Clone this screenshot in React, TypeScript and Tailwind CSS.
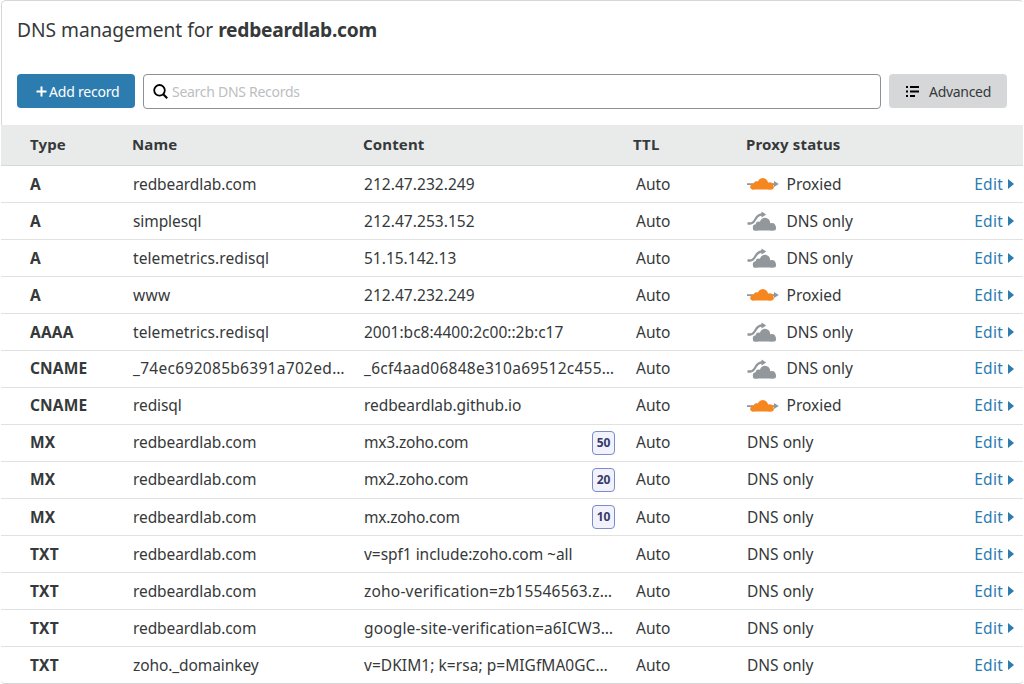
import React from "react";

type Row = {
  type: string;
  name: string;
  content: string;
  nameClass?: string;
  contentClass?: string;
  priority?: string;
  status: "proxied" | "dns" | "none";
  raised?: boolean;
};

const rows: Row[] = [
  { type: "A", name: "redbeardlab.com", content: "212.47.232.249", contentClass: "tracking-[0.05px]", status: "proxied" },
  { type: "A", name: "simplesql", content: "212.47.253.152", contentClass: "tracking-[0.05px]", status: "dns" },
  { type: "A", name: "telemetrics.redisql", nameClass: "tracking-[0.08px]", content: "51.15.142.13", status: "dns" },
  { type: "A", name: "www", nameClass: "tracking-[0.3px]", content: "212.47.232.249", contentClass: "tracking-[0.05px]", status: "proxied" },
  { type: "AAAA", name: "telemetrics.redisql", nameClass: "tracking-[0.08px]", content: "2001:bc8:4400:2c00::2b:c17", status: "dns" },
  { type: "CNAME", name: "_74ec692085b6391a702ed…", nameClass: "tracking-[0.3px]", content: "_6cf4aad06848e310a69512c455…", contentClass: "tracking-[0.25px]", status: "dns", raised: true },
  { type: "CNAME", name: "redisql", content: "redbeardlab.github.io", contentClass: "tracking-[-0.07px]", status: "proxied", raised: true },
  { type: "MX", name: "redbeardlab.com", content: "mx3.zoho.com", contentClass: "tracking-[-0.2px]", priority: "50", status: "none", raised: true },
  { type: "MX", name: "redbeardlab.com", content: "mx2.zoho.com", contentClass: "tracking-[-0.2px]", priority: "20", status: "none", raised: true },
  { type: "MX", name: "redbeardlab.com", content: "mx.zoho.com", contentClass: "tracking-[-0.2px]", priority: "10", status: "none" },
  { type: "TXT", name: "redbeardlab.com", content: "v=spf1 include:zoho.com ~all", contentClass: "tracking-[-0.04px]", status: "none" },
  { type: "TXT", name: "redbeardlab.com", content: "zoho-verification=zb15546563.z…", contentClass: "tracking-[0.2px]", status: "none" },
  { type: "TXT", name: "redbeardlab.com", content: "google-site-verification=a6ICW3…", contentClass: "tracking-[0.15px]", status: "none" },
  { type: "TXT", name: "zoho._domainkey", content: "v=DKIM1; k=rsa; p=MIGfMA0GC…", contentClass: "tracking-[0.05px]", status: "none" },
];

function ProxiedIcon() {
  return (
    <svg width="32" height="14" viewBox="0 0 32 14" className="shrink-0">
      <path d="M0 6.200h27V4l4.800 3L27 10V7.900H0z" fill="#92979b" />
      <g fill="#f6871f">
        <circle cx="15.800" cy="6.500" r="5.400" />
        <circle cx="9.600" cy="7.200" r="2.900" />
        <circle cx="6.300" cy="9.600" r="2.800" />
        <circle cx="22.700" cy="8.800" r="3.600" />
        <rect x="3.400" y="8" width="23.400" height="4.400" rx="1.800" />
      </g>
    </svg>
  );
}

function DnsIcon() {
  return (
    <svg width="32" height="20" viewBox="0 0 32 20" className="shrink-0">
      <path d="M.5 12.500h2.700c2.700 0 3.700-1.700 5.200-4.300S11.500 3.600 14.500 3.500H16" fill="none" stroke="#92979b" strokeWidth="2.300" />
      <path d="M14.500.5l4.700 3-4.700 3z" fill="#92979b" />
      <g fill="#92979b">
        <circle cx="18" cy="12" r="5.200" />
        <circle cx="11.700" cy="13.400" r="3" />
        <circle cx="9" cy="16.400" r="3.200" />
        <circle cx="24.800" cy="15.700" r="3.800" />
        <rect x="6" y="14.600" width="23" height="5" rx="2.200" />
      </g>
    </svg>
  );
}

export default function App() {
  return (
    <div className="h-[684px] w-[1024px] overflow-hidden bg-white pl-px font-['Noto_Sans',sans-serif] text-[15.5px] leading-5 text-[#36393a]">
      <div className="flex h-[684px] flex-col rounded-[5px] border border-[#d5d7d8] border-r-transparent">
        <h1 className="h-[73px] shrink-0 pt-[15px] pl-[15px] text-[19.2px] leading-7 whitespace-nowrap">
          <span className="tracking-[-0.03px]">DNS management for </span>
          <b className="font-bold tracking-[-0.25px]">redbeardlab.com</b>
        </h1>
        <div className="flex h-[51px] shrink-0 gap-2 pl-[15px] text-[14px]">
          <button className="flex h-[34px] w-[118px] items-center rounded-[4px] bg-[#2c7cb0] pl-[19px] text-white">
            <svg width="11" height="11" viewBox="0 0 11 11" className="mr-[2px]">
              <path d="M5.500.5v10M.5 5.500h10" stroke="white" strokeWidth="2" />
            </svg>
            <span className="pt-px tracking-[-0.2px] whitespace-nowrap">Add record</span>
          </button>
          <div className="flex h-[35px] w-[738px] items-center rounded-[4px] border border-[#8c9196] pl-[9px]">
            <svg width="15" height="15" viewBox="0 0 15 15" className="mr-[4px]">
              <circle cx="6.500" cy="6.300" r="5.300" fill="none" stroke="black" strokeWidth="1.800" />
              <path d="M10.200 10.200l4 4" stroke="black" strokeWidth="2" />
            </svg>
            <span className="tracking-[-0.28px] text-[#bcbebf]">Search DNS Records</span>
          </div>
          <button className="flex h-[34px] w-[118px] items-center rounded-[4px] bg-[#d5d7d8] pl-[17px]">
            <svg width="13" height="11" viewBox="0 0 13 11" fill="black" className="mr-[10px]">
              <path d="M0 0h2v2H0zM4 0h9v2H4zM0 4.500h2v2H0zM4 4.500h9v2H4zM0 9h2v2H0zM4 9h5v2H4z" />
            </svg>
            <span className="pt-px tracking-[-0.3px]">Advanced</span>
          </button>
        </div>
        <div className="-ml-px grid h-[41px] shrink-0 grid-cols-[102px_231px_270px_113px_1fr] items-center border-b border-[#d5d7d8] bg-[#e9ebeb] pb-0.5 pl-[29px] text-[15px] font-bold tracking-[0.15px]">
          <span>Type</span>
          <span>Name</span>
          <span>Content</span>
          <span>TTL</span>
          <span>Proxy status</span>
        </div>
        {rows.map((r, i) => {
          const lift = r.raised ? "pb-0.5" : "pb-0";
          return (
            <div
              key={i}
              className="-ml-px grid h-[37px] shrink-0 grid-cols-[103px_231px_272px_111px_1fr] items-center border-b border-[#e0e2e2] bg-white pl-[29px] whitespace-nowrap last:-mb-px last:rounded-b-[4px] last:border-[#d5d7d8]"
            >
              <b className={`font-bold tracking-[0.15px] ${lift}`}>{r.type}</b>
              <span className={`${lift} ${r.nameClass ?? "tracking-[-0.09px]"}`}>{r.name}</span>
              <div className="flex items-center justify-between pr-[21px]">
                <span className={`${lift} ${r.contentClass ?? ""}`}>{r.content}</span>
                {r.priority && (
                  <span className="flex h-6 w-[23px] items-center justify-center rounded-[4px] border border-[#7b8bcb] bg-[#f1f2fb] text-xs font-bold text-[#343b69]">
                    {r.priority}
                  </span>
                )}
              </div>
              <span className={lift}>Auto</span>
              <div className="flex items-center">
                {r.status !== "none" && (
                  <span className="flex w-[39.5px] items-center">{r.status === "proxied" ? <ProxiedIcon /> : <DnsIcon />}</span>
                )}
                <span className={lift}>{r.status === "proxied" ? "Proxied" : "DNS only"}</span>
                <a className="ml-auto flex items-center gap-[5px] pr-[9px] text-[#2c7cb0]">
                  <span className={`tracking-[0.25px] ${lift}`}>Edit</span>
                  <svg width="6" height="10" viewBox="0 0 6 10">
                    <path d="M0 0l6 5-6 5z" fill="#2c7cb0" />
                  </svg>
                </a>
              </div>
            </div>
          );
        })}
      </div>
    </div>
  );
}
